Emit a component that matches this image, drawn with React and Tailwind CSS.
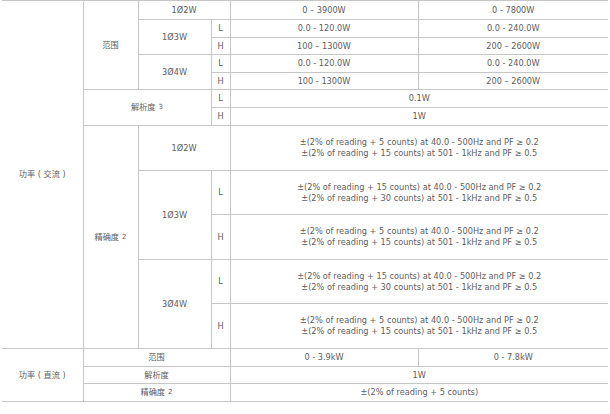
import React from "react";

const B = "border border-[#c6c6c6]";
const first = "border-l-0";
const last = "border-r-0";

function Sup({ children }) {
  return <sup className="ml-[3px] text-[7px] relative -top-[1px]">{children}</sup>;
}

function Two({ a, b }) {
  return (
    <div className="leading-[11px]">
      <div>{a}</div>
      <div>{b}</div>
    </div>
  );
}

export default function App() {
  const acc1 = [
    "±(2% of reading + 5 counts) at 40.0 - 500Hz and PF ≥ 0.2",
    "±(2% of reading + 15 counts) at 501 - 1kHz and PF ≥ 0.5",
  ];
  const acc2 = [
    "±(2% of reading + 15 counts) at 40.0 - 500Hz and PF ≥ 0.2",
    "±(2% of reading + 30 counts) at 501 - 1kHz and PF ≥ 0.5",
  ];

  return (
    <div className="w-[610px] h-[414px] bg-white pl-[2px] pr-[2px] font-['DejaVu_Sans','Noto_Sans_CJK_SC',sans-serif] text-[8.2px] text-[#606060]">
      <table className="w-[606px] border-collapse text-center table-fixed">
        <colgroup>
          <col className="w-[81px]" />
          <col className="w-[55px]" />
          <col className="w-[73px]" />
          <col className="w-[19px]" />
          <col className="w-[188px]" />
          <col className="w-[190px]" />
        </colgroup>
        <tbody>
          {/* 功率(交流) — 范围 */}
          <tr className="h-[19px]">
            <td rowSpan={12} className={`${B} ${first}`}>功率 ( 交流 )</td>
            <td rowSpan={5} className={B}>范围</td>
            <td colSpan={2} className={B}>1Ø2W</td>
            <td className={B}>0 – 3900W</td>
            <td className={`${B} ${last}`}>0 - 7800W</td>
          </tr>
          <tr className="h-[18px]">
            <td rowSpan={2} className={B}>1Ø3W</td>
            <td className={B}>L</td>
            <td className={B}>0.0 - 120.0W</td>
            <td className={`${B} ${last}`}>0.0 - 240.0W</td>
          </tr>
          <tr className="h-[17px]">
            <td className={B}>H</td>
            <td className={B}>100 – 1300W</td>
            <td className={`${B} ${last}`}>200 – 2600W</td>
          </tr>
          <tr className="h-[18px]">
            <td rowSpan={2} className={B}>3Ø4W</td>
            <td className={B}>L</td>
            <td className={B}>0.0 - 120.0W</td>
            <td className={`${B} ${last}`}>0.0 - 240.0W</td>
          </tr>
          <tr className="h-[17px]">
            <td className={B}>H</td>
            <td className={B}>100 - 1300W</td>
            <td className={`${B} ${last}`}>200 – 2600W</td>
          </tr>

          {/* 解析度 */}
          <tr className="h-[18px]">
            <td rowSpan={2} colSpan={2} className={B}>
              解析度<Sup>3</Sup>
            </td>
            <td className={B}>L</td>
            <td colSpan={2} className={`${B} ${last}`}>0.1W</td>
          </tr>
          <tr className="h-[18px]">
            <td className={B}>H</td>
            <td colSpan={2} className={`${B} ${last}`}>1W</td>
          </tr>

          {/* 精确度 */}
          <tr className="h-[45px]">
            <td rowSpan={5} className={B}>
              精确度<Sup>2</Sup>
            </td>
            <td colSpan={2} className={B}>1Ø2W</td>
            <td colSpan={2} className={`${B} ${last}`}>
              <Two a={acc1[0]} b={acc1[1]} />
            </td>
          </tr>
          <tr className="h-[44px]">
            <td rowSpan={2} className={B}>1Ø3W</td>
            <td className={B}>L</td>
            <td colSpan={2} className={`${B} ${last}`}>
              <Two a={acc2[0]} b={acc2[1]} />
            </td>
          </tr>
          <tr className="h-[45px]">
            <td className={B}>H</td>
            <td colSpan={2} className={`${B} ${last}`}>
              <Two a={acc1[0]} b={acc1[1]} />
            </td>
          </tr>
          <tr className="h-[44px]">
            <td rowSpan={2} className={B}>3Ø4W</td>
            <td className={B}>L</td>
            <td colSpan={2} className={`${B} ${last}`}>
              <Two a={acc2[0]} b={acc2[1]} />
            </td>
          </tr>
          <tr className="h-[45px]">
            <td className={B}>H</td>
            <td colSpan={2} className={`${B} ${last}`}>
              <Two a={acc1[0]} b={acc1[1]} />
            </td>
          </tr>

          {/* 功率(直流) */}
          <tr className="h-[18px]">
            <td rowSpan={3} className={`${B} ${first}`}>功率 ( 直流 )</td>
            <td colSpan={3} className={B}>范围</td>
            <td className={B}>0 - 3.9kW</td>
            <td className={`${B} ${last}`}>0 - 7.8kW</td>
          </tr>
          <tr className="h-[17px]">
            <td colSpan={3} className={B}>解析度</td>
            <td colSpan={2} className={`${B} ${last}`}>1W</td>
          </tr>
          <tr className="h-[18px]">
            <td colSpan={3} className={B}>
              精确度<Sup>2</Sup>
            </td>
            <td colSpan={2} className={`${B} ${last}`}>±(2% of reading + 5 counts)</td>
          </tr>
        </tbody>
      </table>
    </div>
  );
}
